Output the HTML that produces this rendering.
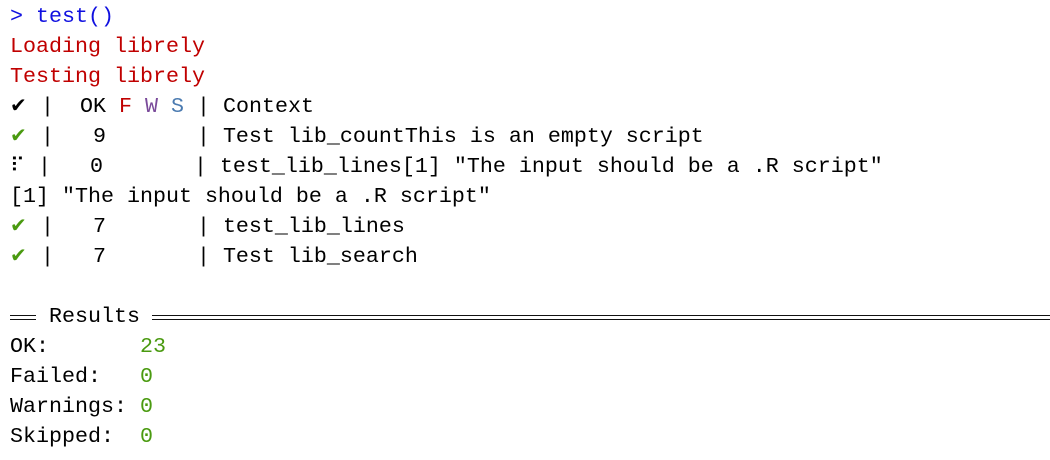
<!DOCTYPE html>
<html><head><meta charset="utf-8"><style>
html,body{margin:0;padding:0;background:#fff;width:1050px;height:460px;overflow:hidden}
.t{position:absolute;left:10px;top:2px;font-family:"Liberation Mono","DejaVu Sans Mono",monospace;font-size:21.67px;color:#000}
.t div{height:30px;line-height:30px;white-space:pre;overflow:visible}
.b{color:#1010e0}.r{color:#c00000}.g{color:#4a9a10}.w{color:#7a4a9a}.s{color:#4a7ab0}
.c{display:inline-block;width:18px;font-family:"DejaVu Sans",sans-serif;font-size:20px;line-height:0;vertical-align:baseline}
.rule{position:absolute;left:152px;right:0;height:1px;background:#111}
.rule2{position:absolute;left:10px;width:26px;height:1px;background:#111}
</style></head><body>
<div class="t">
<div class="b">&gt; test()</div>
<div class="r">Loading librely</div>
<div class="r">Testing librely</div>
<div><span class="c">✔</span> |  OK <span class="r">F</span> <span class="w">W</span> <span class="s">S</span> | Context</div>
<div><span class="c g">✔</span> |   9       | Test lib_countThis is an empty script</div>
<div><span class="c" style="width:15px">⠏</span> |   0       | test_lib_lines[1] "The input should be a .R script"</div>
<div>[1] "The input should be a .R script"</div>
<div><span class="c g">✔</span> |   7       | test_lib_lines</div>
<div><span class="c g">✔</span> |   7       | Test lib_search</div>
<div> </div>
<div>   Results</div>
<div>OK:       <span class="g">23</span></div>
<div>Failed:   <span class="g">0</span></div>
<div>Warnings: <span class="g">0</span></div>
<div>Skipped:  <span class="g">0</span></div>
</div>
<div class="rule2" style="top:315px"></div><div class="rule2" style="top:319px"></div>
<div class="rule" style="top:315px"></div><div class="rule" style="top:319px"></div>
</body></html>
